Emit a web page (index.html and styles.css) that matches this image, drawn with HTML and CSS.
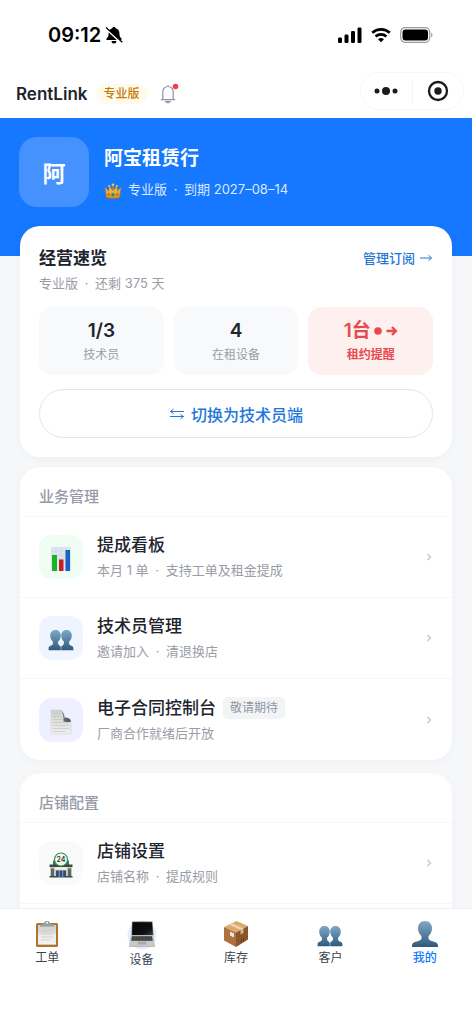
FILE: index.html
```html
<!DOCTYPE html>
<html lang="zh-CN">
<head>
<meta charset="utf-8">
<meta name="viewport" content="width=device-width, initial-scale=1">
<title>RentLink</title>
<link rel="stylesheet" href="styles.css">
</head>
<body>
<svg class="defs" width="0" height="0" aria-hidden="true">
  <defs>
    <linearGradient id="g-person" x1="0" y1="0" x2="0" y2="1"><stop offset="0" stop-color="#7fa9c8"/><stop offset="1" stop-color="#31597c"/></linearGradient>
    <linearGradient id="g-gold" x1="0" y1="0" x2="0" y2="1"><stop offset="0" stop-color="#ffd84d"/><stop offset="1" stop-color="#d88a1c"/></linearGradient>
    <linearGradient id="g-paper" x1="0" y1="0" x2="0" y2="1"><stop offset="0" stop-color="#cfcfcf"/><stop offset="1" stop-color="#f1f1ef"/></linearGradient>
    <linearGradient id="g-fold" x1="0" y1="0" x2="1" y2="1"><stop offset="0" stop-color="#8a8a8a"/><stop offset="1" stop-color="#4e4e4e"/></linearGradient>
    <linearGradient id="g-screen" x1="0" y1="0" x2="1" y2="1"><stop offset="0" stop-color="#050505"/><stop offset=".7" stop-color="#101010"/><stop offset="1" stop-color="#3a3a3a"/></linearGradient>
    <symbol id="people" viewBox="0 0 26 22">
      <path fill="url(#g-person)" d="M7.500 1C4.600 1 2.200 3 2.200 6.600c0 2.500 1 4.800 2.700 6v1.800C4.900 16.500.6 16.500.6 19v2.200h12.200V18c-.4-2-2.700-1.800-2.700-3.600v-1.800c1.700-1.200 2.700-3.500 2.700-6C12.800 3 10.400 1 7.500 1z"/>
      <path fill="url(#g-person)" d="M18.500 1c-2.900 0-5.300 2-5.300 5.600 0 2.500 1 4.800 2.700 6v1.800c0 1.800-2.300 1.600-2.700 3.600v3.200h12.200V19c0-2.500-4.300-2.500-4.300-4.600v-1.800c1.700-1.200 2.700-3.500 2.700-6C23.800 3 21.400 1 18.500 1z"/>
    </symbol>
  </defs>
</svg>

<header class="statusbar">
  <div class="clock">
    <span>09:12</span>
    <svg width="18" height="18" viewBox="0 0 18 18" aria-hidden="true"><path d="M9 1c-1 0-1.500.6-1.600 1.200C5 2.800 3.600 4.800 3.600 7.300c0 3-.7 4-2 5.100-.6.600-.2 1.700.7 1.700h13.400c.9 0 1.300-1.100.7-1.700-1.300-1.100-2-2.100-2-5.100 0-2.500-1.400-4.500-3.800-5.100C10.500 1.600 10 1 9 1zM6.500 14.900a2.500 2.500 0 0 0 5 0z"/><path d="M1.500 3 16.500 17" stroke="#fff" stroke-width="2.200"/><path d="M1 1.500 17.300 16.200" stroke="#000" stroke-width="1.300"/></svg>
  </div>
  <div class="signals" aria-hidden="true">
    <svg width="24" height="16" viewBox="0 0 24 16"><rect x="0" y="10.500" width="4" height="5.500" rx="1.200"/><rect x="6.500" y="7.500" width="4" height="8.500" rx="1.200"/><rect x="13" y="4" width="4" height="12" rx="1.200"/><rect x="19.500" y="0.500" width="4" height="15.500" rx="1.200"/></svg>
    <svg width="20" height="16" viewBox="0 0 20 16" fill="none" stroke="#000" stroke-width="2.700"><path d="M1.200 5.800c5-4.700 12.600-4.700 17.600 0"/><path d="M4.600 9.500c3.100-2.800 7.700-2.800 10.800 0"/><path d="M7 12.200c1.800-1.500 4.200-1.500 6 0L10 15.300z" fill="#000" stroke="none"/></svg>
    <svg width="34" height="16" viewBox="0 0 34 16"><rect x=".7" y=".7" width="29" height="14.600" rx="4.500" fill="none" stroke="#9b9b9b" stroke-width="1.200"/><rect x="2.500" y="2.500" width="25.500" height="11" rx="3"/><path d="M31.200 5.500v5c1.600-.7 1.600-4.300 0-5z" fill="#9b9b9b"/></svg>
  </div>
</header>

<nav class="topnav">
  <h1 class="brand">RentLink</h1>
  <span class="plan">专业版</span>
  <button class="bell" aria-label="通知">
    <svg width="20" height="22" viewBox="0 0 20 22" fill="none" stroke="#8b93a3" stroke-width="1.200"><path d="M9 3.500V2.300M3.800 16.400V8.700a5.200 5.200 0 0 1 10.400 0v7.700M1.800 16.600h14.400"/><path d="M7.200 18.700 9 19.900l1.800-1.200z" fill="#8b93a3"/><circle cx="16.500" cy="3.500" r="2.800" fill="#f0414b" stroke="none"/></svg>
  </button>
  <div class="capsule">
    <button aria-label="更多"><svg width="24" height="10" viewBox="0 0 24 10" fill="#1a1a1a"><circle cx="3" cy="5" r="2.500"/><circle cx="12" cy="5" r="4"/><circle cx="21" cy="5" r="2.500"/></svg></button>
    <button aria-label="关闭"><svg width="22" height="22" viewBox="0 0 22 22"><circle cx="11" cy="11" r="9" fill="none" stroke="#1a1a1a" stroke-width="2.300"/><circle cx="11" cy="11" r="3.700" fill="#1a1a1a"/></svg></button>
  </div>
</nav>

<main class="content">
  <section class="hero">
    <div class="avatar">阿</div>
    <div class="shop">
      <h2>阿宝租赁行</h2>
      <p><svg width="18" height="16" viewBox="0 0 18 16" aria-hidden="true"><path fill="#a8501c" d="M3 9h12v4H3z"/><path fill="url(#g-gold)" stroke="#b8741a" stroke-width=".5" d="M2.500 14.500 1 4.200l3.600 4L5.500 3l3 4.500L9 1.200l.9 6.300L12.700 3l.8 5.200L17 4.200l-1.500 10.300c-3.600 1.200-9.400 1.200-13 0z"/><circle cx="9" cy="1.800" r="1.300" fill="#f7c948"/><circle cx="5.300" cy="3" r="1" fill="#f7c948"/><circle cx="12.700" cy="3" r="1" fill="#f7c948"/><circle cx="9" cy="11.800" r="1.700" fill="#149a7e"/><circle cx="4.700" cy="11.600" r="1" fill="#d63d35"/><circle cx="13.300" cy="11.600" r="1" fill="#d63d35"/></svg>
      <span>专业版 <i>·</i> 到期 2027–08–14</span></p>
    </div>
  </section>

  <section class="card overview">
    <div class="overview-head">
      <h3>经营速览</h3>
      <a href="#plan">管理订阅 <svg width="14" height="10" viewBox="0 0 14 10" fill="none" stroke="currentColor" aria-hidden="true"><path d="M1 5h11.500M9.500 2.300l3 2.700-3 2.700"/></svg></a>
    </div>
    <p class="sub">专业版 <i>·</i> 还剩 375 天</p>
    <div class="stats">
      <div class="stat"><strong>1/3</strong><span>技术员</span></div>
      <div class="stat"><strong>4</strong><span>在租设备</span></div>
      <div class="stat alert"><strong>1台 <svg width="24" height="12" viewBox="0 0 24 12" aria-hidden="true"><circle cx="4" cy="6" r="3.800" fill="currentColor"/><path d="M12.500 6h9M18 2l4 4-4 4" fill="none" stroke="currentColor" stroke-width="2.300"/></svg></strong><span>租约提醒</span></div>
    </div>
    <button class="switch"><svg width="16" height="12" viewBox="0 0 16 12" fill="none" stroke="currentColor" aria-hidden="true"><path d="M15 3.500H1.500L4.500 1M1 8.500h13.500l-3 2.500M1.500 3.500l3 2M14.500 8.500l-3-2"/></svg>切换为技术员端</button>
  </section>

  <section class="card group">
    <h3>业务管理</h3>
    <button class="row">
      <span class="tile green"><svg width="22" height="26" viewBox="0 0 22 26"><path fill="#dfe5ec" d="M1 1h20v24H1z"/><path stroke="#c9d1db" stroke-width=".5" d="M1 5h20M1 9h20M1 13h20M1 17h20M6 1v24M11 1v24M16 1v24"/><path fill="#16b62a" d="M2 9h5v16H2z"/><path fill="#c81e25" d="M9 13.500h4.500V25H9z"/><path fill="#1863c6" d="M15.500 4H20v21h-4.500z"/></svg></span>
      <span class="text"><b>提成看板</b><small>本月 1 单 <i>·</i> 支持工单及租金提成</small></span>
      <svg class="chev" width="6" height="8" viewBox="0 0 6 8"><path d="M1.500 1 4.500 4l-3 3"/></svg>
    </button>
    <button class="row">
      <span class="tile blue"><svg width="26" height="22"><use href="#people"/></svg></span>
      <span class="text"><b>技术员管理</b><small>邀请加入 <i>·</i> 清退换店</small></span>
      <svg class="chev" width="6" height="8" viewBox="0 0 6 8"><path d="M1.500 1 4.500 4l-3 3"/></svg>
    </button>
    <button class="row">
      <span class="tile indigo"><svg width="22" height="26" viewBox="0 0 22 26"><path fill="url(#g-paper)" stroke="#cccccc" stroke-width=".5" d="M1 1h10l2.500 8 7.500 3v13H1z"/><path d="M3 4.500h8M3 7.500h9M3 10.500h10M3 13.500h16M3 16.500h16M3 19.500h16M3 22.500h12" stroke="#c4c4c4" stroke-width=".7"/><path fill="url(#g-fold)" d="M10.500 1c2.500 1.200 4 4 4 7.600 3.300-.2 6 .8 6.500 3.900-2 .8-5.500.6-7.500.1.300-4-.2-8.600-3-11.600z"/></svg></span>
      <span class="text"><b>电子合同控制台<em>敬请期待</em></b><small>厂商合作就绪后开放</small></span>
      <svg class="chev" width="6" height="8" viewBox="0 0 6 8"><path d="M1.500 1 4.500 4l-3 3"/></svg>
    </button>
  </section>

  <section class="card group">
    <h3>店铺配置</h3>
    <button class="row">
      <span class="tile gray"><svg width="24" height="26" viewBox="0 0 24 26"><path fill="#2c7d4b" d="M4 8.500h16V13H4z"/><path fill="#c9c9b6" d="M1 14h22v11H1z"/><path fill="#3e4a48" d="M.5 12.500h23V15H.5zM.5 24h23v1.500H.5z"/><path fill="#596b68" d="M2 16.500h3V24H2zM19 16.500h3V24h-3z"/><path fill="#f2eddb" d="M6 15h12v3H6z"/><path fill="#2f4f78" d="M7 18.500h10V25H7z"/><path stroke="#9db9d6" stroke-width=".8" d="M10.300 18.500V25M13.700 18.500V25"/><circle cx="12" cy="7.500" r="6.500" fill="#f5faf6" stroke="#35935a" stroke-width="1.200"/><text class="sign" x="12" y="10" text-anchor="middle">24</text></svg></span>
      <span class="text"><b>店铺设置</b><small>店铺名称 <i>·</i> 提成规则</small></span>
      <svg class="chev" width="6" height="8" viewBox="0 0 6 8"><path d="M1.500 1 4.500 4l-3 3"/></svg>
    </button>
  </section>
</main>

<nav class="tabs">
  <a href="#orders"><svg width="26" height="28" viewBox="0 0 26 28"><rect x="2" y="3" width="22" height="24" rx="1.500" fill="#ad7431"/><path fill="url(#g-paper)" d="M4 5h18v19.500H4z"/><path fill="#f4f4f2" d="M4 14h18v10.500H4z" opacity=".6"/><path d="M7 11h12M7 14h12M7 17h12M7 20h9" stroke="#c9c9c9" stroke-width=".7"/><path fill="#9a9c9e" d="M6 6.500V4.300c2.500 0 4-.5 4.600-2.300.4-1.300 4.400-1.300 4.800 0 .6 1.800 2.100 2.300 4.600 2.300v2.200z"/><circle cx="13" cy="2.800" r="1" fill="#fff"/></svg>工单</a>
  <a href="#devices"><svg width="30" height="30" viewBox="0 0 30 30"><circle cx="15" cy="15" r="14.500" fill="#e5edff"/><path fill="#6d6f71" d="M5 1.500h20.500l1 14h-22z"/><path fill="url(#g-screen)" d="M5.600 2.200h19.300l.9 12.800H5z"/><path fill="#c8c8c5" d="M3.500 15.500h23l1.500 10.300H2z"/><path fill="#333536" d="M5 16.300h20l.7 4.400H4.300z"/><path stroke="#6c6e6e" stroke-width=".4" d="M4.700 17.800h20.600M4.500 19.200h21M8 16.300v4.400M11 16.300v4.400M14 16.300v4.400M17 16.300v4.400M20 16.300v4.400M23 16.300v4.400"/><path fill="#aaa9a5" d="M11 21.500h8l.3 3h-8.600zM2 25.800h26v1H2z"/></svg>设备</a>
  <a href="#stock"><svg width="26" height="28" viewBox="0 0 26 28"><path fill="#d9aa70" d="M1 7 13.500 1 25 6 13 12.500z"/><path fill="#ac713d" d="M1 7l12 5.500V27L1 20.500z"/><path fill="#8a552a" d="M25 6 13 12.500V27l12-7.500z"/><path fill="#f0d5ad" d="M6 4.600 9 3.200 20.500 8.500l-3 1.600z"/><path fill="#d8b58a" d="M17.500 10.100l3-1.600V13l-3 1.600z"/><path fill="#eee7dc" d="M7 11.500l4 1.900v4l-4-1.900z"/><path stroke="#5c3518" stroke-width=".8" d="M18.500 19v3.500M20.500 18v3.500"/></svg>库存</a>
  <a href="#customers"><svg width="26" height="28"><use href="#people" x="0" y="5" width="26" height="22"/></svg>客户</a>
  <a href="#me" class="active"><svg width="28" height="28" viewBox="0 0 28 28"><path fill="url(#g-person)" d="M14 1c-4 0-7 2.800-7 7.300 0 3.200 1.400 6 3.500 7.700v2.500C10.500 22 1 20.500 1 25.500V27h26v-1.500c0-5-9.500-3.500-9.500-7V16c2.100-1.700 3.500-4.500 3.500-7.700C21 3.800 18 1 14 1z"/></svg>我的</a>
</nav>
</body>
</html>
```

FILE: styles.css
```css
* { box-sizing: border-box; margin: 0; padding: 0; }

body {
  display: flex;
  flex-direction: column;
  height: 100vh;
  overflow: hidden;
  background: #f5f7f9;
  color: #20242e;
  font-family: Inter, "Noto Sans CJK SC", sans-serif;
  font-size: 13px;
}

button { border: 0; background: none; font: inherit; color: inherit; }
a { color: inherit; text-decoration: none; }
svg { flex: none; }
i { margin: 0 3px; font-style: normal; }
.defs { position: absolute; }

.statusbar {
  flex: none;
  display: flex;
  align-items: center;
  justify-content: space-between;
  height: 70px;
  padding: 0 38px 0 48px;
  background: #fff;
}
.clock { display: flex; align-items: center; gap: 4px; color: #000; font-size: 20px; font-weight: 600; }
.signals { display: flex; align-items: center; gap: 9px; }

.topnav {
  flex: none;
  display: flex;
  align-items: center;
  height: 48px;
  padding: 0 8px 0 16px;
  background: #fff;
}
.brand { font-size: 17px; font-weight: 600; }
.plan {
  margin-left: 8px;
  padding: 0 8px;
  border-radius: 10px;
  background: #fffbeb;
  color: #c8790c;
  font-size: 12px;
  font-weight: 500;
  line-height: 20px;
}
.bell { display: flex; margin-left: 11px; }
.capsule {
  display: flex;
  align-items: center;
  width: 104px;
  height: 38px;
  margin: -6px 0 0 auto;
  border: 1px solid #f7f7f7;
  border-radius: 19px;
}
.capsule button { display: flex; flex: 1; align-items: center; justify-content: center; height: 26px; }
.capsule button + button { border-left: 1px solid #f5f5f5; }

.content { flex: 1; min-height: 0; overflow: hidden; }

.hero {
  display: flex;
  gap: 15px;
  height: 138px;
  padding: 19px;
  background: #1677ff;
  color: #fff;
}
.avatar {
  display: grid;
  place-items: center;
  width: 70px;
  height: 70px;
  border-radius: 18px;
  background: #4592ff;
  font-size: 23px;
  font-weight: 600;
}
.shop { padding-top: 6px; }
.shop h2 { font-size: 19px; font-weight: 600; line-height: 32px; }
.shop p { display: flex; align-items: center; gap: 6px; color: #d9e9ff; line-height: 28px; }
.shop svg { margin-top: 4px; }

.card {
  margin: 0 20px 13px;
  border-radius: 20px;
  background: #fff;
  box-shadow: 0 2px 10px rgba(30, 50, 80, .03);
}
.overview { position: relative; margin-top: -30px; margin-bottom: 10px; padding: 19px; }
.overview-head { display: flex; align-items: center; justify-content: space-between; line-height: 26px; }
.overview-head h3 { font-size: 17px; font-weight: 600; }
.overview-head a { display: flex; align-items: center; gap: 4px; color: #2675d3; font-weight: 500; }
.sub { color: #9a9da6; line-height: 24px; }

.stats { display: grid; grid-template-columns: repeat(3, 1fr); gap: 10px; margin: 12px 0 14px; }
.stat {
  display: flex;
  flex-direction: column;
  align-items: center;
  height: 68px;
  padding-top: 11px;
  border-radius: 14px;
  background: #f8f9fb;
}
.stat strong { display: flex; align-items: center; gap: 3px; font-size: 19px; font-weight: 600; line-height: 26px; }
.stat span { color: #9a9da6; font-size: 12px; line-height: 22px; }
.stat.alert { background: #fff0f0; }
.stat.alert strong, .stat.alert span { color: #e74a4d; font-weight: 600; }

.switch {
  display: flex;
  align-items: center;
  justify-content: center;
  gap: 6px;
  width: 100%;
  height: 49px;
  border: 1px solid #d9eaed;
  border-radius: 25px;
  color: #2177dc;
  font-size: 16px;
  font-weight: 500;
}

.group h3 {
  height: 50px;
  padding: 6px 19px 0;
  border-bottom: 1px solid #f6f7f9;
  color: #959aa6;
  font-size: 15px;
  font-weight: 500;
  line-height: 48px;
}
.row {
  display: flex;
  align-items: center;
  gap: 14px;
  width: 100%;
  height: 81px;
  padding: 0 20px 0 19px;
  border-bottom: 1px solid #f5f6f8;
  text-align: left;
}
.group:nth-of-type(3) .row:last-child { border-bottom: 0; }
.group:last-child { padding-bottom: 40px; }
.tile { display: grid; place-items: center; width: 44px; height: 44px; border-radius: 13px; }
.tile svg { margin-top: 4px; }
.green { background: #effdf5; }
.blue { background: #eff5ff; }
.indigo { background: #eff0ff; }
.gray { background: #f9fafa; }
.text { flex: 1; }
.text b { display: flex; align-items: center; gap: 7px; font-size: 17px; font-weight: 500; line-height: 26px; }
.text em {
  padding: 0 7px;
  border-radius: 5px;
  background: #f3f4f6;
  color: #8f96a3;
  font-size: 12px;
  font-style: normal;
  font-weight: 400;
  line-height: 22px;
}
.text small { display: block; color: #9a9da6; font-size: 13px; line-height: 24px; }
.chev { fill: none; stroke: #c4c6ca; stroke-width: 1.4; }
.sign { fill: #27372e; font-size: 7px; font-weight: 600; }

.tabs {
  flex: none;
  display: flex;
  height: 116px;
  padding-top: 11px;
  border-top: 1px solid #eef0f5;
  background: #fff;
}
.tabs a {
  display: flex;
  flex: 1;
  flex-direction: column;
  align-items: center;
  color: #3b4350;
  font-size: 12px;
  font-weight: 400;
  line-height: 20px;
}
.tabs .active { color: #1677ff; font-weight: 500; }
```
